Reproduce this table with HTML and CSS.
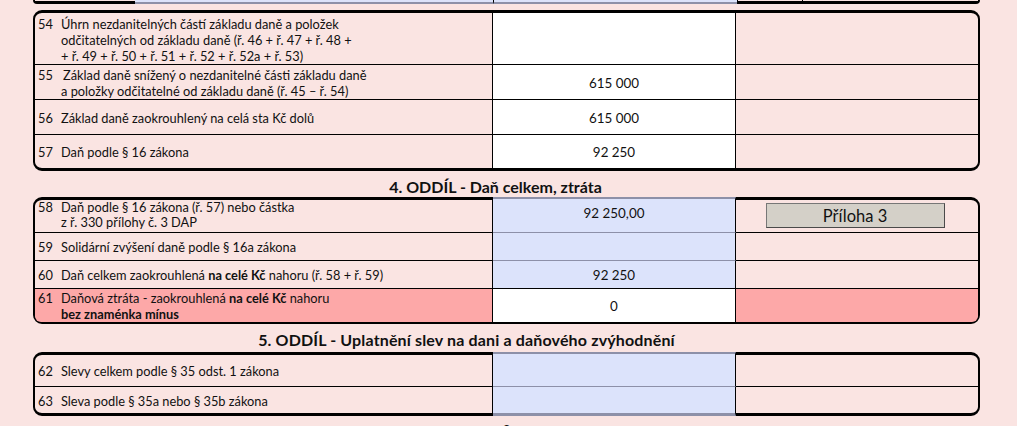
FILE: index.html
```html
<!DOCTYPE html>
<html lang="cs">
<head>
<meta charset="utf-8">
<title>DAP – 4. a 5. oddíl</title>
<link rel="stylesheet" href="styles.css">
</head>
<body>
<div class="page">
  <div class="prev">
    <div class="pc pink"></div>
    <div class="pc blue"></div>
    <div class="pc blue line-l"></div>
    <div class="pc pink line-l"></div>
    <div class="pc pink line-l"></div>
  </div>

  <div class="tbl t1">
    <div class="row h54">
      <div class="lbl top"><div class="in"><span class="num">54</span><span class="txt">Úhrn nezdanitelných částí základu daně a položek<br>odčitatelných od základu daně (ř. 46 + ř. 47 + ř. 48 +<br>+ ř. 49 + ř. 50 + ř. 51 + ř. 52 + ř. 52a + ř. 53)</span></div></div>
      <div class="val white"></div>
      <div class="ext"></div>
    </div>
    <div class="row h55">
      <div class="lbl"><div class="in"><span class="num">55</span><span class="txt"><span class="ind">Základ daně snížený o nezdanitelné části základu daně</span><br>a položky odčitatelné od základu daně (ř. 45 – ř. 54)</span></div></div>
      <div class="val white">615 000</div>
      <div class="ext"></div>
    </div>
    <div class="row h56">
      <div class="lbl"><div class="in"><span class="num">56</span><span class="txt">Základ daně zaokrouhlený na celá sta Kč dolů</span></div></div>
      <div class="val white">615 000</div>
      <div class="ext"></div>
    </div>
    <div class="row h57">
      <div class="lbl"><div class="in"><span class="num">57</span><span class="txt">Daň podle § 16 zákona</span></div></div>
      <div class="val white">92 250</div>
      <div class="ext"></div>
    </div>
  </div>

  <h2 class="sec sec4">4. ODDÍL - Daň celkem, ztráta</h2>

  <div class="tbl t2">
    <div class="row h58">
      <div class="lbl top"><div class="in"><span class="num">58</span><span class="txt">Daň podle § 16 zákona (ř. 57) nebo částka<br>z ř. 330 přílohy č. 3 DAP</span></div></div>
      <div class="val blue first top">92 250,00</div>
      <div class="ext center"><button class="btn" type="button">Příloha 3</button></div>
    </div>
    <div class="row h59">
      <div class="lbl"><div class="in"><span class="num">59</span><span class="txt">Solidární zvýšení daně podle § 16a zákona</span></div></div>
      <div class="val blue"></div>
      <div class="ext"></div>
    </div>
    <div class="row h60">
      <div class="lbl"><div class="in"><span class="num">60</span><span class="txt">Daň celkem zaokrouhlená <b>na celé Kč</b> nahoru (ř. 58 + ř. 59)</span></div></div>
      <div class="val blue">92 250</div>
      <div class="ext"></div>
    </div>
    <div class="row h61">
      <div class="lbl red bl"><div class="in"><span class="num">61</span><span class="txt">Daňová ztráta - zaokrouhlená <b>na celé Kč</b> nahoru<br><b>bez znaménka mínus</b></span></div></div>
      <div class="val white">0</div>
      <div class="ext red br"></div>
    </div>
  </div>

  <h2 class="sec sec5">5. ODDÍL - Uplatnění slev na dani a daňového zvýhodnění</h2>

  <div class="tbl t3">
    <div class="row h62">
      <div class="lbl"><div class="in"><span class="num">62</span><span class="txt">Slevy celkem podle § 35 odst. 1 zákona</span></div></div>
      <div class="val blue first"></div>
      <div class="ext"></div>
    </div>
    <div class="row h63">
      <div class="lbl"><div class="in"><span class="num">63</span><span class="txt">Sleva podle § 35a nebo § 35b zákona</span></div></div>
      <div class="val blue last"></div>
      <div class="ext"></div>
    </div>
  </div>

  <div class="pageno">2</div>
</div>
</body>
</html>
```

FILE: styles.css
```css
html, body {
  margin: 0;
  padding: 0;
  background: #fae4e2;
}

body {
  font-family: Lato, "Open Sans", "Noto Sans", sans-serif;
  color: #111;
  width: 1017px;
  height: 426px;
  overflow: hidden;
}

.page {
  padding-left: 33px;
  width: 947px;
}

/* remains of the previous table */
.prev {
  display: grid;
  grid-template-columns: 100px 358px 244px 65px 1fr;
  height: 1px;
  border: 2px solid #000;
  border-top: 0;
  border-bottom-width: 3px;
  border-radius: 0 0 8px 8px;
}
.pc.pink { background: #fae4e2; }
.pc.blue {
  background: #dce3fb;
  border-bottom: 2px solid #8d90a8;
  margin-bottom: -3px;
}
.pc.line-l { border-left: 1px solid #000; }

/* tables */
.tbl {
  border: 2px solid #000;
  border-top-width: 3px;
  border-bottom-width: 3px;
  border-radius: 9px;
}
.t1 { margin-top: 6px; }

.row {
  display: grid;
  grid-template-columns: 458px 243px 1fr;
}
.row + .row > div { border-top: 1px solid #000; }
.row + .row > .val.blue { border-top-color: #8d90a8; }

.lbl {
  display: flex;
  align-items: center;
  padding-left: 3px;
  padding-top: 1px;
  font-size: 12.8px;
  line-height: 16px;
  border-right: 1px solid #000;
}
.lbl.top { align-items: flex-start; padding-top: 3px; }
.in {
  display: flex;
  align-items: flex-start;
  flex: 1;
}
.num { flex: 0 0 23px; }
.txt { flex: 1; }
.ind { padding-left: 2px; }

.val {
  display: flex;
  align-items: center;
  justify-content: center;
  padding-top: 1px;
  font-size: 13.4px;
  border-right: 1px solid #000;
}
.val.top { align-items: flex-start; padding-top: 5px; }
.val.white { background: #fff; }
.val.blue { background: #dce3fb; }
.val.blue.first {
  margin-top: -3px;
  border-top: 2px solid #8d90a8;
}
.val.blue.first.top { padding-top: 6px; }
.val.blue.last {
  margin-bottom: -3px;
  border-bottom: 3px solid #8d90a8;
}

.ext { display: flex; }
.ext.center {
  justify-content: center;
  align-items: flex-start;
  padding-top: 3px;
  padding-right: 4px;
}

.red { background: #fda8a8; }
.bl { border-bottom-left-radius: 6px; }
.br { border-bottom-right-radius: 6px; }

/* row heights */
.h54 { height: 51px; }
.h55 { height: 35px; }
.h56 { height: 35px; }
.h57 { height: 34px; }
.h58 { height: 32px; }
.h58 > .lbl.top { padding-top: 0; line-height: 15px; }
.h59 { height: 28px; }
.h60 { height: 28px; }
.h61 { height: 33px; }
.h62 { height: 31px; }
.h63 { height: 27px; }

.btn {
  width: 179px;
  height: 25px;
  background: #d4d0c8;
  border: 1px solid #4a4a4a;
  border-top-color: #777;
  border-left-color: #777;
  font-family: Lato, "Open Sans", sans-serif;
  font-size: 16.5px;
  color: #111;
  padding: 0;
  line-height: 22px;
}

/* section headings */
.sec {
  margin: 0;
  text-align: center;
  font-size: 16px;
  font-weight: bold;
}
.sec4 { height: 26px; line-height: 31px; padding-right: 22px; }
.sec5 { height: 28px; line-height: 32px; padding-right: 80px; letter-spacing: 0.15px; }

.pageno {
  text-align: center;
  font-size: 14px;
  line-height: 16px;
  margin-top: 6px;
}
```
